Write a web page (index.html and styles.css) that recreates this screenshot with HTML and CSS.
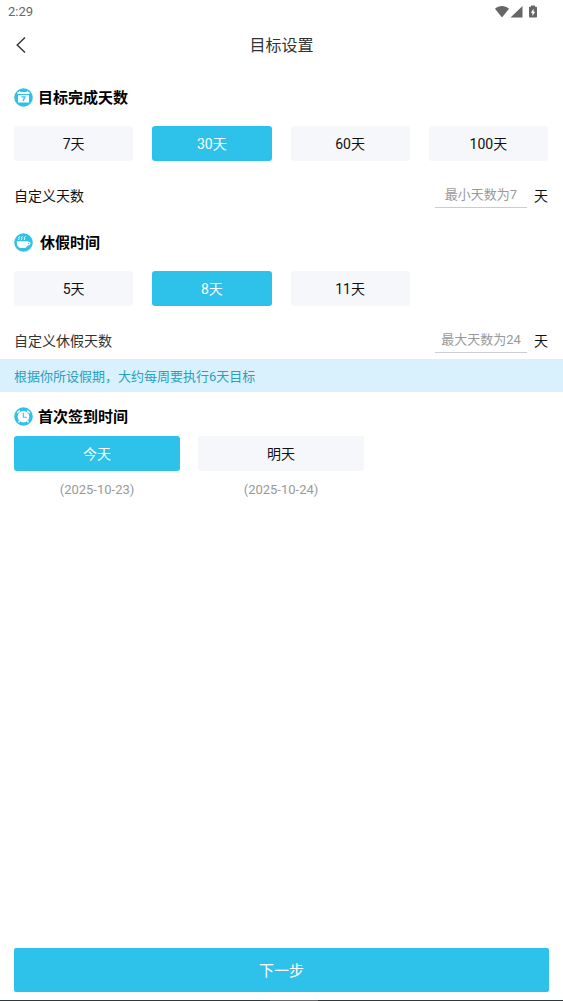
FILE: index.html
```html
<!DOCTYPE html>
<html lang="zh-CN">
<head>
<meta charset="utf-8">
<meta name="viewport" content="width=device-width, initial-scale=1">
<title>目标设置</title>
<link rel="stylesheet" href="styles.css">
</head>
<body>
<div class="screen">
  <div class="status">
    <span class="clock">2:29</span>
    <svg class="status-icons" width="44" height="14" viewBox="0 0 44 14" aria-hidden="true">
      <path fill="#666" d="M0 3.800C4.100 .2 9.900 .2 14 3.800L7 12.500z"/>
      <path fill="#666" d="M27.500 1v11.500H15.500z"/>
      <path fill="#666" d="M36 .5h4v1.200h1.200q.8 0 .8.800v9q0 1-1 1h-6q-1 0-1-1V2.500q0-.8.8-.8H36z"/>
      <path fill="#fff" d="M38.600 3.700v3H40.200L37.400 11V7.800H35.800z"/>
    </svg>
  </div>
  <header class="header">
    <button class="back" type="button" aria-label="返回">
      <svg width="12" height="18" viewBox="0 0 12 18" aria-hidden="true"><path d="M10 1.500L2.200 9l7.800 7.500" fill="none" stroke="#333" stroke-width="1.400"/></svg>
    </button>
    <h1 class="title">目标设置</h1>
  </header>
  <main class="content">
    <section class="spaced">
      <h2 class="heading">
        <svg width="19" height="19" viewBox="0 0 19 19" aria-hidden="true">
          <circle cx="9.500" cy="9.500" r="9.300" fill="#2ec2eb"/>
          <path fill="#fff" d="M3.500 4h1.700V3h1v1h6.600V3h1v1h1.700v2h-12z"/>
          <path fill="#fff" d="M4 7h11v7.500H4z"/>
          <path d="M7.500 8.800h3.300L9.200 13" fill="none" stroke="#2ec2eb" stroke-width="1.300"/>
        </svg>
        <span>目标完成天数</span>
      </h2>
      <div class="options four">
        <button class="option" type="button" aria-pressed="false">7天</button>
        <button class="option" type="button" aria-pressed="true">30天</button>
        <button class="option" type="button" aria-pressed="false">60天</button>
        <button class="option" type="button" aria-pressed="false">100天</button>
      </div>
      <div class="custom">
        <label class="custom-label" for="days">自定义天数</label>
        <input class="field" id="days" type="text" inputmode="numeric" placeholder="最小天数为7">
        <span class="unit">天</span>
      </div>
    </section>
    <section>
      <h2 class="heading wide">
        <svg width="19" height="19" viewBox="0 0 19 19" aria-hidden="true">
          <circle cx="9.500" cy="9.500" r="9.300" fill="#2ec2eb"/>
          <path fill="#fff" d="M2.800 8.200h11.400v1.200q0 4.200-3.500 5.500H6.300Q2.800 13.600 2.800 9.400z"/>
          <path d="M13.500 9.300h1.300q1.300 0 1.100 1.300-.3 1.400-2.700 1.500" fill="none" stroke="#fff" stroke-width="1.100"/>
          <path d="M5.800 3.300q-1.300 1.100-.8 1.900t-.5 1.700M8.600 3.300q-1.300 1.100-.8 1.900t-.5 1.700M11.400 3.300q-1.300 1.100-.8 1.900t-.5 1.700" fill="none" stroke="#fff"/>
        </svg>
        <span>休假时间</span>
      </h2>
      <div class="options four">
        <button class="option" type="button" aria-pressed="false">5天</button>
        <button class="option" type="button" aria-pressed="true">8天</button>
        <button class="option" type="button" aria-pressed="false">11天</button>
      </div>
      <div class="custom">
        <label class="custom-label muted" for="rest">自定义休假天数</label>
        <input class="field" id="rest" type="text" inputmode="numeric" placeholder="最大天数为24">
        <span class="unit">天</span>
      </div>
    </section>
    <p class="notice">根据你所设假期，大约每周要执行6天目标</p>
    <section>
      <h2 class="heading compact">
        <svg width="19" height="19" viewBox="0 0 19 19" aria-hidden="true">
          <circle cx="9.500" cy="9.500" r="9.300" fill="#2ec2eb"/>
          <circle cx="9.500" cy="9.700" r="5.800" fill="#fff"/>
          <path d="M3.300 6.300q.5-2 2.700-2.600M13 3.700q2.200.6 2.700 2.600M5.500 14l-1 1.400M13.500 14l1 1.400" fill="none" stroke="#fff" stroke-width="1.500"/>
          <path d="M9.300 5.800V10.200h3.500" fill="none" stroke="#2ec2eb" stroke-width="1.100"/>
        </svg>
        <span>首次签到时间</span>
      </h2>
      <div class="options three">
        <div class="day">
          <button class="option" type="button" aria-pressed="true">今天</button>
          <span class="date">(2025-10-23)</span>
        </div>
        <div class="day">
          <button class="option" type="button" aria-pressed="false">明天</button>
          <span class="date">(2025-10-24)</span>
        </div>
      </div>
    </section>
  </main>
  <footer class="footer">
    <button class="next" type="button">下一步</button>
  </footer>
  <div class="navbar"><span class="handle"></span></div>
</div>
</body>
</html>
```
FILE: styles.css
```css
* {
  box-sizing: border-box;
}

body {
  margin: 0;
  background: #fff;
  color: #111;
  font-family: Roboto, "Noto Sans CJK SC", sans-serif;
  font-size: 14px;
}

button,
input {
  margin: 0;
  padding: 0;
  border: 0;
  font: inherit;
}

.screen {
  display: flex;
  flex-direction: column;
  min-height: 100vh;
}

.status {
  display: flex;
  align-items: center;
  justify-content: space-between;
  height: 23px;
  padding: 0 24px 0 8px;
  color: #666;
  font-size: 13px;
}

.header {
  display: grid;
  grid-template-columns: 44px 1fr 44px;
  align-items: center;
  height: 44px;
}

.back {
  display: flex;
  align-items: center;
  height: 44px;
  padding-left: 15px;
  background: none;
}

.title {
  margin: 0;
  padding-bottom: 2px;
  color: #333;
  font-size: 16px;
  font-weight: 400;
  text-align: center;
}

.content {
  flex: 1;
  padding-top: 12px;
}

.spaced {
  margin-bottom: 10px;
}

.heading {
  display: flex;
  align-items: center;
  gap: 5px;
  height: 36px;
  margin: 0;
  padding: 0 14px;
  color: #000;
  font-size: 15px;
  font-weight: 700;
}

.heading span {
  padding-bottom: 2px;
}

.wide {
  gap: 7px;
}

.options {
  display: grid;
  padding: 0 15px 0 14px;
}

.four {
  grid-template-columns: repeat(4, 1fr);
  gap: 19px;
  padding-top: 11px;
}

.three {
  grid-template-columns: repeat(3, 1fr);
  gap: 18px;
}

.option {
  width: 100%;
  height: 35px;
  padding-bottom: 2px;
  border-radius: 3px;
  background: #f6f7fa;
  color: #111;
}

.option[aria-pressed="true"] {
  background: #2ec2eb;
  color: #fff;
}

.custom {
  display: flex;
  align-items: center;
  height: 53px;
  padding: 14px 15px 0 14px;
}

.custom-label {
  flex: 1;
}

.muted {
  color: #333;
}

.field {
  width: 92px;
  height: 27px;
  margin-right: 7px;
  border-bottom: 1px solid #ccc;
  border-radius: 0;
  background: none;
  font-size: 13px;
  text-align: center;
}

.field::placeholder {
  color: #999;
  opacity: 1;
}

.notice {
  display: flex;
  align-items: center;
  min-height: 33px;
  margin: 0;
  padding: 0 14px;
  background: #d9f0fd;
  color: #2a9fc0;
  font-size: 13px;
}

.compact {
  height: 44px;
  padding-top: 5px;
}

.day {
  display: flex;
  flex-direction: column;
  align-items: center;
  gap: 9px;
}

.date {
  color: #999;
  font-size: 13px;
  line-height: 20px;
}

.footer {
  padding: 0 14px 8px;
}

.next {
  width: 100%;
  height: 44px;
  padding-bottom: 2px;
  border-radius: 2px;
  background: #2ec2eb;
  color: #fff;
  font-size: 15px;
}

.navbar {
  display: flex;
  justify-content: center;
  height: 1px;
  padding-left: 24px;
  background: #2d3a3c;
}

.handle {
  width: 48px;
  background: #666;
}
```
